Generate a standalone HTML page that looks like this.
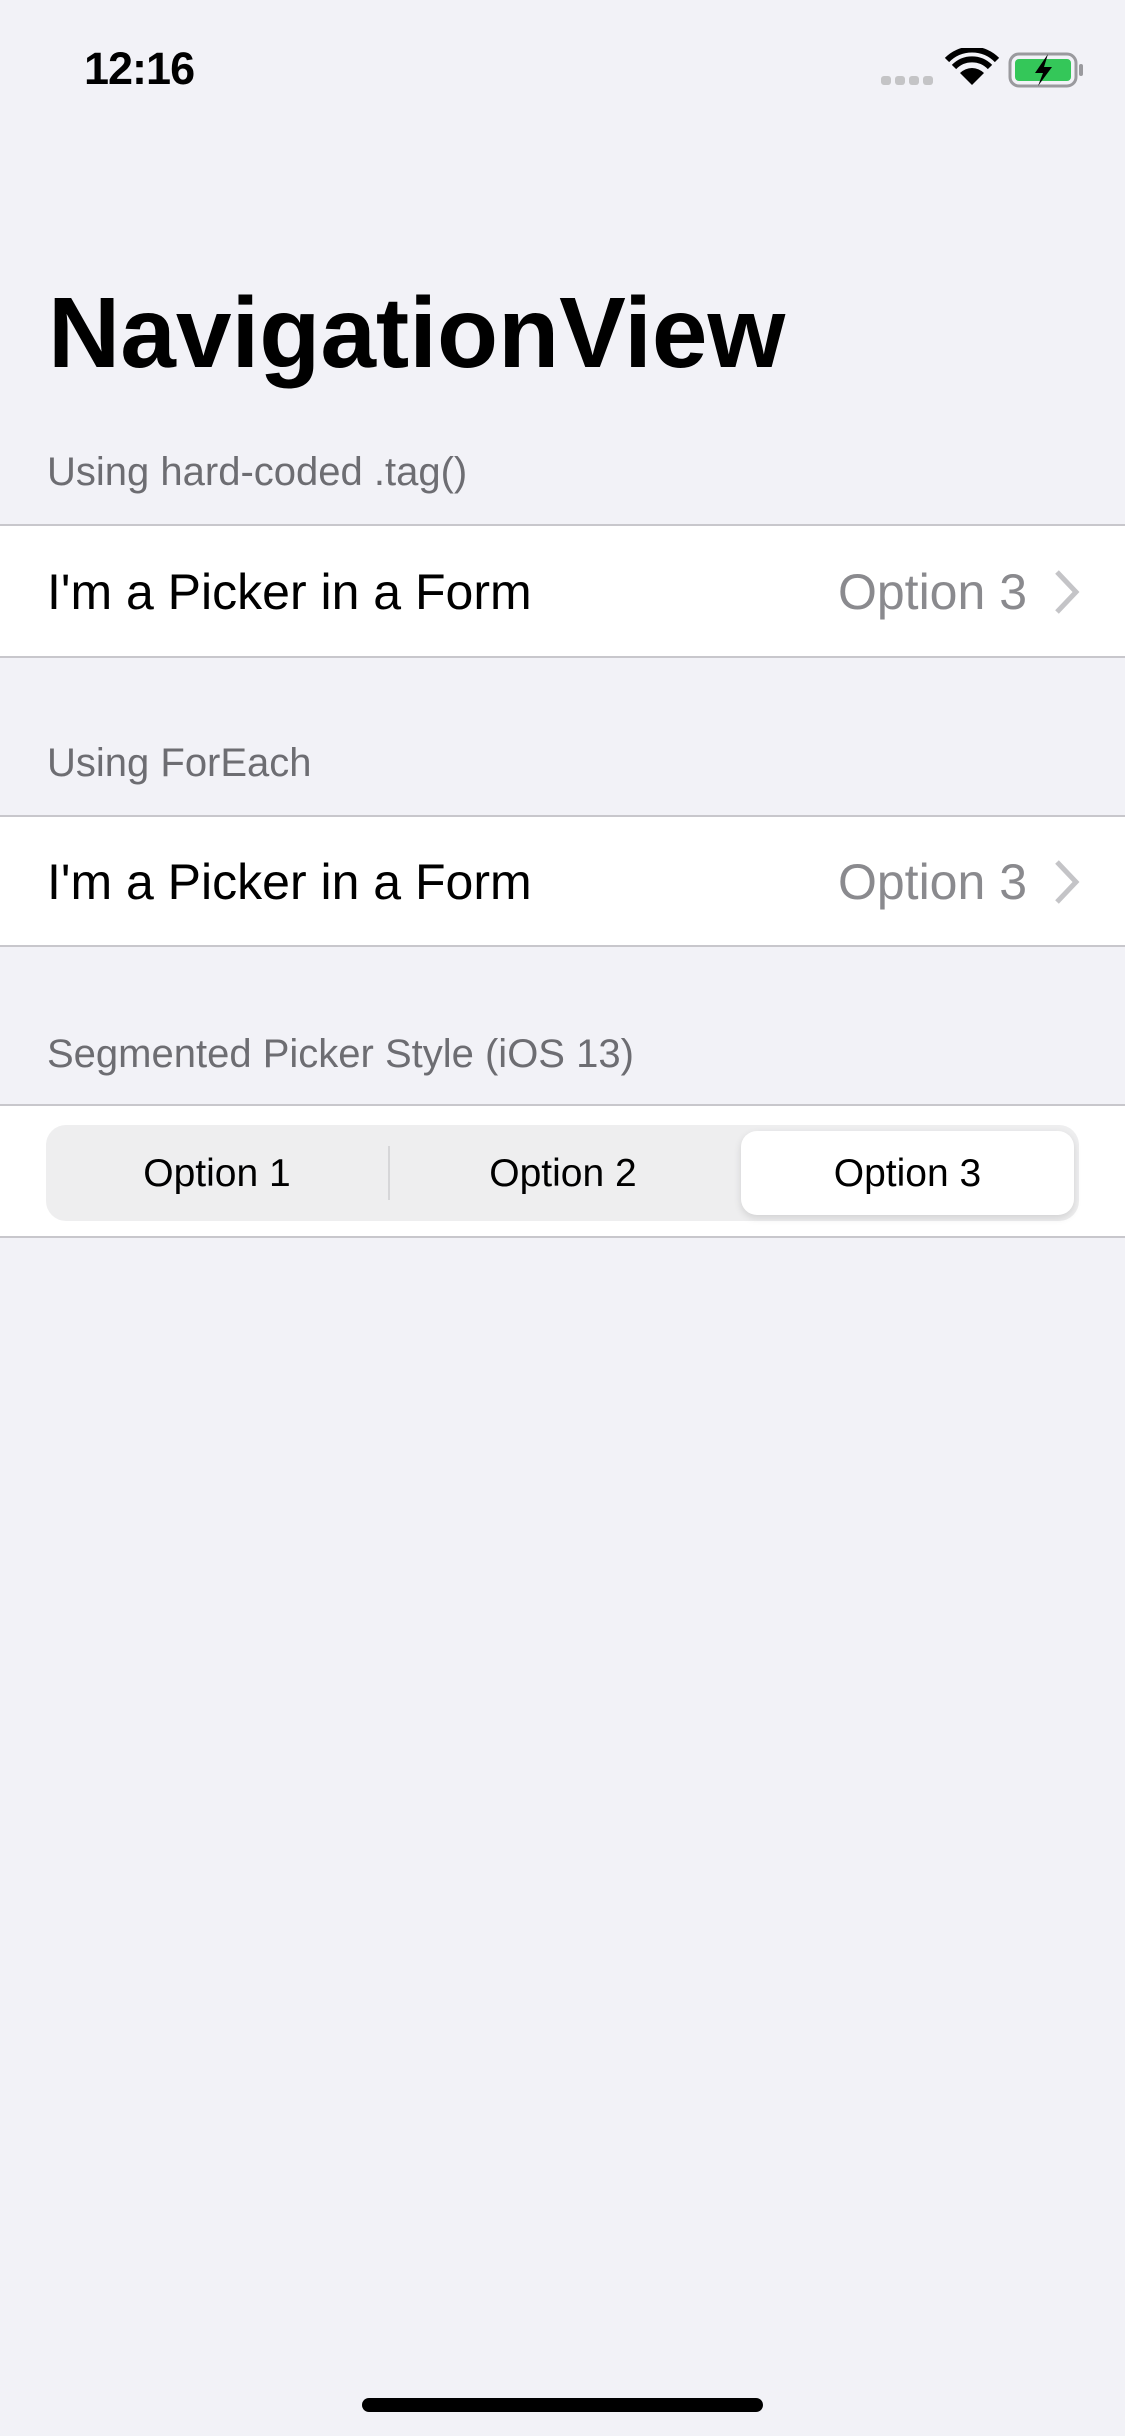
<!DOCTYPE html>
<html><head><meta charset="utf-8"><style>
*{margin:0;padding:0;box-sizing:border-box}
body{width:1125px;height:2436px;background:#f2f2f7;font-family:"Liberation Sans",sans-serif;position:relative;overflow:hidden}
.a{position:absolute;white-space:nowrap}
.hdr{font-size:40px;color:#6d6d72;left:47px}
.row{position:absolute;left:0;width:1125px;background:#fff;border-top:2px solid #c8c7cc;border-bottom:2px solid #c8c7cc}
.lbl{font-size:50px;color:#000;left:47px}
.val{font-size:50px;color:#8a8a8e;right:98px}
</style></head><body>
<div class="a" style="left:84px;top:43px;font-size:45px;font-weight:bold;letter-spacing:-1px">12:16</div>
<svg class="a" style="left:880px;top:48px" width="210" height="42" viewBox="0 0 210 42">
<g fill="#c4c4c6"><rect x="1" y="28" width="10" height="9" rx="3"/><rect x="15" y="28" width="10" height="9" rx="3"/><rect x="29" y="28" width="10" height="9" rx="3"/><rect x="43" y="28" width="10" height="9" rx="3"/></g>
<path d="M92 37 L80 25 A17 17 0 0 1 104 25 Z" fill="#000"/>
<path d="M74 19 A25 25 0 0 1 110 19" stroke="#000" stroke-width="6" fill="none"/>
<path d="M67 12 A35 35 0 0 1 117 12" stroke="#000" stroke-width="6" fill="none"/>
<rect x="130" y="6" width="66" height="32" rx="9" fill="none" stroke="#9a9a9e" stroke-width="3"/>
<rect x="135" y="11" width="56" height="22" rx="4" fill="#34c759"/>
<rect x="199" y="16" width="4" height="12" rx="2" fill="#9a9a9e"/>
<path d="M168 6 L155 25 L163 25 L158 38 L172 19 L164 19 Z" fill="#000"/>
</svg>
<div class="a" style="left:48px;top:276px;font-size:100px;font-weight:bold;letter-spacing:0">NavigationView</div>
<div class="a hdr" style="top:450px">Using hard-coded .tag()</div>
<div class="row" style="top:524px;height:134px"></div>
<div class="a lbl" style="top:563px">I'm a Picker in a Form</div>
<div class="a val" style="top:563px">Option 3</div>
<svg class="a" style="left:1052px;top:568px" width="30" height="48"><path d="M5 4 L24 24 L5 44" stroke="#c4c4c7" stroke-width="5" fill="none"/></svg>
<div class="a hdr" style="top:741px">Using ForEach</div>
<div class="row" style="top:815px;height:132px"></div>
<div class="a lbl" style="top:853px">I'm a Picker in a Form</div>
<div class="a val" style="top:853px">Option 3</div>
<svg class="a" style="left:1052px;top:858px" width="30" height="48"><path d="M5 4 L24 24 L5 44" stroke="#c4c4c7" stroke-width="5" fill="none"/></svg>
<div class="a hdr" style="top:1032px">Segmented Picker Style (iOS 13)</div>
<div class="row" style="top:1104px;height:134px"></div>
<div class="a" style="left:46px;top:1125px;width:1033px;height:96px;background:#eeeeef;border-radius:20px"></div>
<div class="a" style="left:388px;top:1146px;width:2px;height:54px;background:#d6d6d8"></div>
<div class="a" style="left:741px;top:1131px;width:333px;height:84px;background:#fff;border-radius:16px;box-shadow:0 3px 8px rgba(0,0,0,.12)"></div>
<div class="a" style="left:46px;width:342px;top:1152px;text-align:center;font-size:39px">Option 1</div>
<div class="a" style="left:390px;width:346px;top:1152px;text-align:center;font-size:39px">Option 2</div>
<div class="a" style="left:741px;width:333px;top:1152px;text-align:center;font-size:39px">Option 3</div>
<div class="a" style="left:362px;top:2398px;width:401px;height:14px;background:#000;border-radius:7px"></div>
</body></html>
